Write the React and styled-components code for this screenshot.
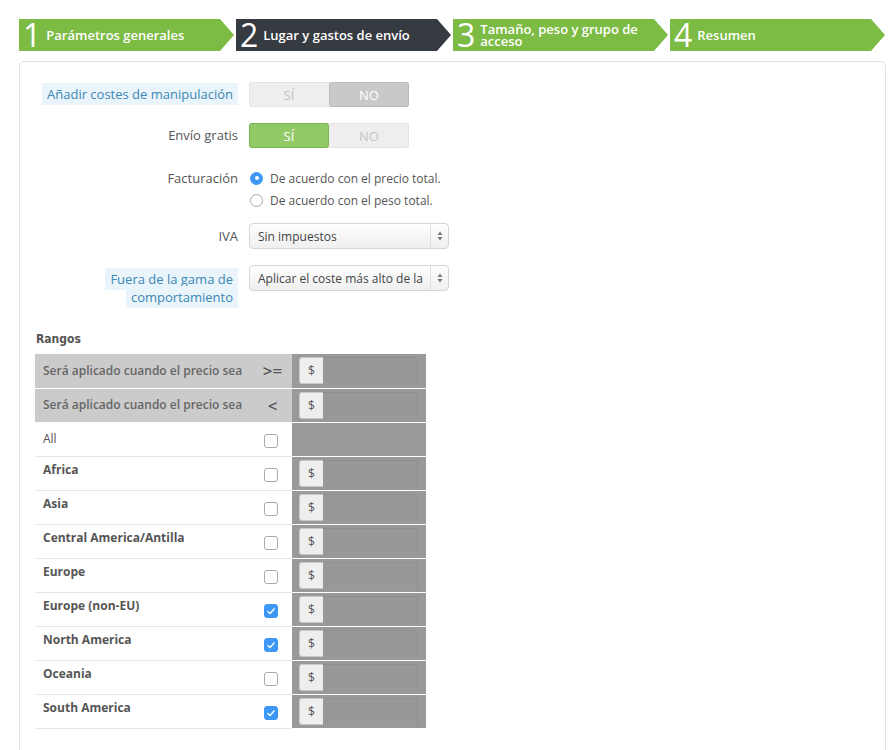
import React from 'react';
import styled, { createGlobalStyle } from 'styled-components';

const GlobalStyle = createGlobalStyle`
	body {
		margin: 0;
		background: #fff;
		font-family: "Open Sans", "Liberation Sans", sans-serif;
		color: #555;
	}
`;

const Page = styled.div`
	padding: 19px 0 0 19px;
`;

const Steps = styled.div`
	display: flex;
	gap: 2px;
`;

const Step = styled.div`
	width: 215px;
	height: 32px;
	box-sizing: border-box;
	display: flex;
	align-items: center;
	padding: 0 22px 0 4px;
	color: #fff;
	background: ${p => (p.$active ? '#363a41' : '#7cbb44')};
	clip-path: polygon(0 0, calc(100% - 14px) 0, 100% 50%, calc(100% - 14px) 100%, 0 100%);
`;

const StepNum = styled.span`
	font-size: 32px;
	font-weight: 400;
	line-height: 32px;
	margin-right: 5px;
	flex: none;
`;

const StepLabel = styled.span`
	font-size: 13px;
	font-weight: 600;
	line-height: 12px;
`;

const Panel = styled.div`
	margin-top: 10px;
	width: 867px;
	box-sizing: border-box;
	border: 1px solid #e2e2e2;
	border-radius: 5px;
	padding: 20px 15px 60px;
`;

const FormRow = styled.div`
	display: flex;
	align-items: flex-start;
	gap: 11px;
	margin-bottom: ${p => p.$gap || 16}px;
`;

const Label = styled.div`
	width: 203px;
	flex: none;
	text-align: right;
	font-size: 13px;
	line-height: 18px;
	padding-top: ${p => p.$top || 4}px;
	color: #555;
`;

const Hint = styled.span`
	background: #eaf5fb;
	color: #3a87b5;
	padding: 2px 5px;
	-webkit-box-decoration-break: clone;
	box-decoration-break: clone;
`;

const Switch = styled.div`
	display: flex;
	width: 160px;
	height: 25px;
	box-sizing: border-box;
	border-radius: 3px;
	background: #eee;
	box-shadow: inset 0 0 0 1px #e4e4e4;
`;

const SwitchOption = styled.span`
	flex: 1;
	display: flex;
	align-items: center;
	justify-content: center;
	font-size: 13px;
	font-weight: 400;
	border-radius: 3px;
	color: ${p => (p.$on ? '#fff' : '#c4c4c4')};
	background: ${p => (p.$on ? p.$color : 'transparent')};
	border: 1px solid ${p => (p.$on ? p.$border : 'transparent')};
`;

const Radios = styled.div`
	display: flex;
	flex-direction: column;
	padding-top: 3px;
`;

const RadioLine = styled.label`
	display: flex;
	align-items: center;
	gap: 7px;
	height: 22px;
	font-size: 12px;
	color: #555;
	padding-left: 1px;
`;

const RadioDot = styled.span`
	width: 13px;
	height: 13px;
	box-sizing: border-box;
	border-radius: 50%;
	background: ${p => (p.$on ? '#3d97f5' : '#fff')};
	border: 1px solid ${p => (p.$on ? '#3d97f5' : '#a9a9a9')};
	display: flex;
	align-items: center;
	justify-content: center;
	&::after {
		content: '';
		width: 4px;
		height: 4px;
		border-radius: 50%;
		background: ${p => (p.$on ? '#fff' : 'transparent')};
	}
`;

const Select = styled.div`
	width: 200px;
	height: 26px;
	box-sizing: border-box;
	display: flex;
	align-items: center;
	border: 1px solid #d6d6d6;
	border-radius: 4px;
	background: linear-gradient(#fefefe, #efefef);
	font-size: 12px;
	color: #444;
`;

const SelectText = styled.span`
	flex: 1;
	padding-left: 8px;
	white-space: nowrap;
	overflow: hidden;
`;

const SelectArrows = styled.span`
	width: 17px;
	height: 100%;
	display: flex;
	align-items: center;
	justify-content: center;
	border-left: 1px solid #e0e0e0;
`;

const Heading = styled.div`
	margin: 24px 0 6px 1px;
	font-family: "DejaVu Sans Condensed", "DejaVu Sans", sans-serif;
	font-stretch: condensed;
	font-size: 12px;
	font-weight: 700;
	line-height: 18px;
	color: #555;
`;

const Table = styled.table`
	border-collapse: collapse;
	width: 391px;
	table-layout: fixed;
`;

const Col = styled.col`
	width: ${p => p.$w}px;
`;

const Row = styled.tr`
	height: 34px;
`;

const NameCell = styled.td`
	padding: ${p => (p.$head || p.$plain ? '0 8px' : '5px 8px 0')};
	vertical-align: ${p => (p.$head || p.$plain ? 'middle' : 'top')};
	font-size: 12px;
	line-height: 16px;
	white-space: nowrap;
	font-weight: ${p => (p.$plain ? 400 : p.$head ? 600 : 700)};
	color: ${p => (p.$head ? '#666' : '#555')};
	background: ${p => (p.$head ? '#cbcbcb' : '#fff')};
	border-bottom: 1px solid ${p => (p.$head ? '#fff' : '#e6e6e6')};
`;

const MarkCell = styled.td`
	text-align: center;
	vertical-align: middle;
	font-size: 17px;
	font-weight: 600;
	color: #555;
	background: ${p => (p.$head ? '#cbcbcb' : '#fff')};
	border-bottom: 1px solid ${p => (p.$head ? '#fff' : '#e6e6e6')};
	padding: 0 0 0 ${p => (p.$head ? 8 : 5)}px;
`;

const ValueCell = styled.td`
	background: #999;
	border-bottom: 1px solid #fff;
	padding: 0 8px 0 7px;
	vertical-align: middle;
`;

const InputGroup = styled.div`
	display: flex;
	height: 27px;
`;

const Addon = styled.span`
	width: 24px;
	box-sizing: border-box;
	display: flex;
	align-items: center;
	justify-content: center;
	background: #eee;
	border: 1px solid #c8c8c8;
	border-right: none;
	border-radius: 3px 0 0 3px;
	font-size: 12px;
	color: #555;
`;

const Input = styled.span`
	flex: 1;
	border: 1px solid #8f8f8f;
	border-left: none;
	border-bottom-color: #999;
	border-radius: 0 4px 4px 0;
	background: #989898;
`;

const Box = styled.span`
	display: inline-flex;
	align-items: center;
	justify-content: center;
	width: 14px;
	height: 14px;
	box-sizing: border-box;
	border-radius: 3px;
	background: ${p => (p.$on ? '#3d97f5' : '#fff')};
	border: 1px solid ${p => (p.$on ? '#3d97f5' : '#a9a9a9')};
	vertical-align: middle;
`;

const steps = [
	{ n: 1, label: 'Parámetros generales' },
	{ n: 2, label: 'Lugar y gastos de envío', active: true },
	{ n: 3, label: 'Tamaño, peso y grupo de acceso' },
	{ n: 4, label: 'Resumen' },
];

const zones = [
	{ name: 'Africa', on: false },
	{ name: 'Asia', on: false },
	{ name: 'Central America/Antilla', on: false },
	{ name: 'Europe', on: false },
	{ name: 'Europe (non-EU)', on: true },
	{ name: 'North America', on: true },
	{ name: 'Oceania', on: false },
	{ name: 'South America', on: true },
];

const Toggle = ({ value, color, border }) => (
	<Switch>
		<SwitchOption $on={value} $color={color} $border={border}>SÍ</SwitchOption>
		<SwitchOption $on={!value} $color={color} $border={border}>NO</SwitchOption>
	</Switch>
);

const Arrows = () => (
	<svg width="6" height="10" viewBox="0 0 6 10">
		<path d="M3 0.5 L5.5 4 H0.5 Z M3 9.5 L0.5 6 H5.5 Z" fill="#777" />
	</svg>
);

const Check = ({ on }) => (
	<Box $on={on}>
		{on && (
			<svg width="10" height="8" viewBox="0 0 10 8">
				<path d="M1.5 4.2 L4 6.5 L8.5 1.5" stroke="#fff" strokeWidth="1.3" fill="none" />
			</svg>
		)}
	</Box>
);

const Money = () => (
	<InputGroup>
		<Addon>$</Addon>
		<Input />
	</InputGroup>
);

const App = () => (
	<Page>
		<GlobalStyle />
		<Steps>
			{steps.map(s => (
				<Step key={s.n} $active={s.active}>
					<StepNum>{s.n}</StepNum>
					<StepLabel>{s.label}</StepLabel>
				</Step>
			))}
		</Steps>

		<Panel>
			<FormRow>
				<Label $top={3}><Hint>Añadir costes de manipulación</Hint></Label>
				<Toggle value={false} color="#c9c9c9" border="#b9b9b9" />
			</FormRow>
			<FormRow>
				<Label $top={3}>Envío gratis</Label>
				<Toggle value={true} color="#92c967" border="#79b548" />
			</FormRow>
			<FormRow $gap={12}>
				<Label $top={5}>Facturación</Label>
				<Radios>
					<RadioLine><RadioDot $on />De acuerdo con el precio total.</RadioLine>
					<RadioLine><RadioDot />De acuerdo con el peso total.</RadioLine>
				</Radios>
			</FormRow>
			<FormRow>
				<Label>IVA</Label>
				<Select>
					<SelectText>Sin impuestos</SelectText>
					<SelectArrows><Arrows /></SelectArrows>
				</Select>
			</FormRow>
			<FormRow>
				<Label $top={5}><Hint>Fuera de la gama de comportamiento</Hint></Label>
				<Select>
					<SelectText>Aplicar el coste más alto de la</SelectText>
					<SelectArrows><Arrows /></SelectArrows>
				</Select>
			</FormRow>

			<Heading>Rangos</Heading>
			<Table>
				<colgroup>
					<Col $w={210} />
					<Col $w={47} />
					<Col $w={134} />
				</colgroup>
				<tbody>
					<Row>
						<NameCell $head>Será aplicado cuando el precio sea</NameCell>
						<MarkCell $head>&gt;=</MarkCell>
						<ValueCell><Money /></ValueCell>
					</Row>
					<Row>
						<NameCell $head>Será aplicado cuando el precio sea</NameCell>
						<MarkCell $head>&lt;</MarkCell>
						<ValueCell><Money /></ValueCell>
					</Row>
					<Row>
						<NameCell $plain>All</NameCell>
						<MarkCell><Check on={false} /></MarkCell>
						<ValueCell />
					</Row>
					{zones.map(z => (
						<Row key={z.name}>
							<NameCell>{z.name}</NameCell>
							<MarkCell><Check on={z.on} /></MarkCell>
							<ValueCell><Money /></ValueCell>
						</Row>
					))}
				</tbody>
			</Table>
		</Panel>
	</Page>
);

export default App;
